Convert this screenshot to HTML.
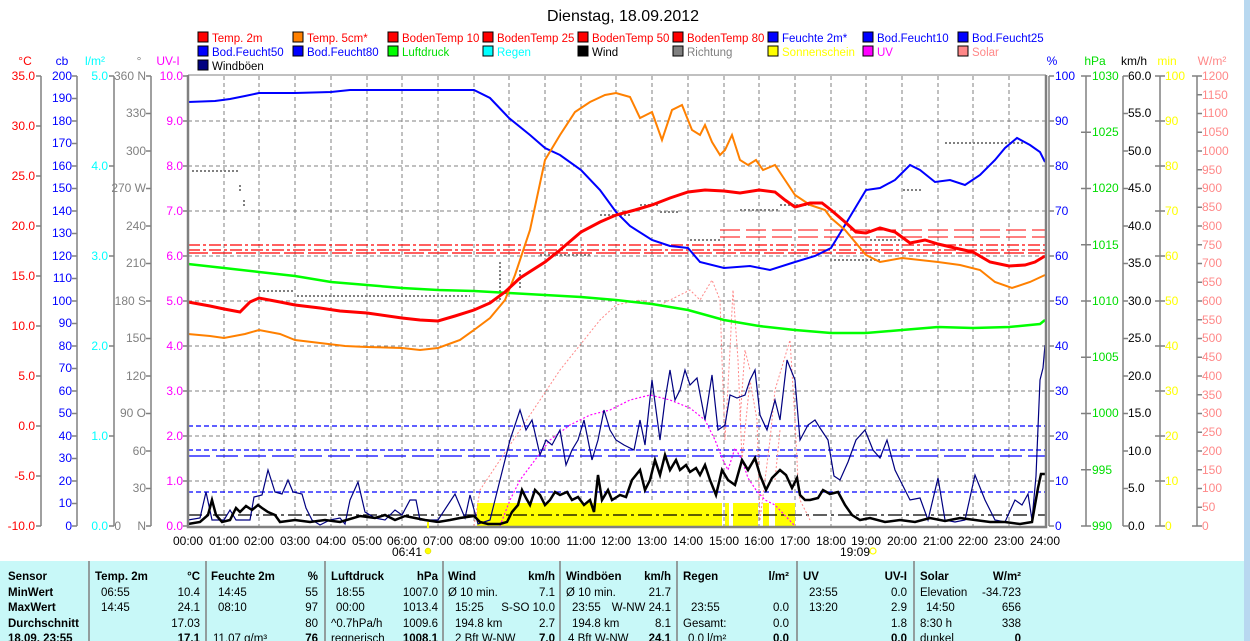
<!DOCTYPE html>
<html><head><meta charset="utf-8"><style>
html,body{margin:0;padding:0;background:#fff;width:1250px;height:641px;overflow:hidden}
svg{display:block;font-family:"Liberation Sans",Arial,sans-serif}
</style></head><body>
<svg width="1250" height="641" viewBox="0 0 1250 641" xmlns="http://www.w3.org/2000/svg">
<rect width="1250" height="641" fill="#fff"/>
<text x="623" y="21" font-size="16" text-anchor="middle" fill="#000">Dienstag, 18.09.2012</text>
<g font-size="11.5" stroke="#000" stroke-width="1">
<rect x="198" y="32" width="10" height="10" fill="#f00"/><rect x="293" y="32" width="10" height="10" fill="#ff8000"/><rect x="388" y="32" width="10" height="10" fill="#f00"/><rect x="483" y="32" width="10" height="10" fill="#f00"/><rect x="578" y="32" width="10" height="10" fill="#f00"/><rect x="673" y="32" width="10" height="10" fill="#f00"/><rect x="768" y="32" width="10" height="10" fill="#00f"/><rect x="863" y="32" width="10" height="10" fill="#00f"/><rect x="958" y="32" width="10" height="10" fill="#00f"/>
<rect x="198" y="46" width="10" height="10" fill="#00f"/><rect x="293" y="46" width="10" height="10" fill="#00f"/><rect x="388" y="46" width="10" height="10" fill="#0f0"/><rect x="483" y="46" width="10" height="10" fill="#0ff"/><rect x="578" y="46" width="10" height="10" fill="#000"/><rect x="673" y="46" width="10" height="10" fill="#808080"/><rect x="768" y="46" width="10" height="10" fill="#ff0"/><rect x="863" y="46" width="10" height="10" fill="#f0f"/><rect x="958" y="46" width="10" height="10" fill="#f88"/>
<rect x="198" y="60" width="10" height="10" fill="#000080"/>
</g>
<g font-size="11.5">
<text x="212" y="42" fill="#f00">Temp. 2m</text><text x="307" y="42" fill="#f00">Temp. 5cm*</text><text x="402" y="42" fill="#f00">BodenTemp 10</text><text x="497" y="42" fill="#f00">BodenTemp 25</text><text x="592" y="42" fill="#f00">BodenTemp 50</text><text x="687" y="42" fill="#f00">BodenTemp 80</text><text x="782" y="42" fill="#00f">Feuchte 2m*</text><text x="877" y="42" fill="#00f">Bod.Feucht10</text><text x="972" y="42" fill="#00f">Bod.Feucht25</text>
<text x="212" y="56" fill="#00f">Bod.Feucht50</text><text x="307" y="56" fill="#00f">Bod.Feucht80</text><text x="402" y="56" fill="#0d0">Luftdruck</text><text x="497" y="56" fill="#0ff">Regen</text><text x="592" y="56" fill="#000">Wind</text><text x="687" y="56" fill="#808080">Richtung</text><text x="782" y="56" fill="#ff0">Sonnenschein</text><text x="877" y="56" fill="#f0f">UV</text><text x="972" y="56" fill="#f88">Solar</text>
<text x="212" y="70" fill="#000">Windböen</text>
</g>
<g font-size="12">
<text x="25" y="65" fill="#f00" text-anchor="middle">°C</text><text x="62" y="65" fill="#00f" text-anchor="middle">cb</text><text x="95" y="65" fill="#0ff" text-anchor="middle">l/m²</text><text x="139" y="65" fill="#808080" text-anchor="middle">°</text><text x="168" y="65" fill="#f0f" text-anchor="middle">UV-I</text>
<text x="1052" y="65" fill="#00f" text-anchor="middle">%</text><text x="1095" y="65" fill="#0d0" text-anchor="middle">hPa</text><text x="1134" y="65" fill="#000" text-anchor="middle">km/h</text><text x="1167" y="65" fill="#ff0" text-anchor="middle">min</text><text x="1212" y="65" fill="#f88" text-anchor="middle">W/m²</text>
</g>
<g stroke="#808080" stroke-width="1.5" fill="none">
<path d="M41 76V526M77 76V526M114 76V526M151 76V526M1049 76V526M1086 76V526M1123 76V526M1160 76V526M1197 76V526"/>
<path d="M36 76h5M36 126h5M36 176h5M36 226h5M36 276h5M36 326h5M36 376h5M36 426h5M36 476h5M36 526h5"/>
<path d="M72 76h5M72 98.5h5M72 121h5M72 143.5h5M72 166h5M72 188.5h5M72 211h5M72 233.5h5M72 256h5M72 278.5h5M72 301h5M72 323.5h5M72 346h5M72 368.5h5M72 391h5M72 413.5h5M72 436h5M72 458.5h5M72 481h5M72 503.5h5M72 526h5"/>
<path d="M109 76h5M109 166h5M109 256h5M109 346h5M109 436h5M109 526h5"/>
<path d="M146 76h5M146 113.5h5M146 151h5M146 188.5h5M146 226h5M146 263.5h5M146 301h5M146 338.5h5M146 376h5M146 413.5h5M146 451h5M146 488.5h5M146 526h5"/>
<path d="M183 76h5M183 121h5M183 166h5M183 211h5M183 256h5M183 301h5M183 346h5M183 391h5M183 436h5M183 481h5M183 526h5"/>
<path d="M1049 76h5M1049 121h5M1049 166h5M1049 211h5M1049 256h5M1049 301h5M1049 346h5M1049 391h5M1049 436h5M1049 481h5M1049 526h5"/>
<path d="M1081 76h10M1081 132.25h10M1081 188.5h10M1081 244.75h10M1081 301h10M1081 357.25h10M1081 413.5h10M1081 469.75h10M1081 526h10"/>
<path d="M1123 76h5M1123 113.5h5M1123 151h5M1123 188.5h5M1123 226h5M1123 263.5h5M1123 301h5M1123 338.5h5M1123 376h5M1123 413.5h5M1123 451h5M1123 488.5h5M1123 526h5"/>
<path d="M1155 76h10M1155 121h10M1155 166h10M1155 211h10M1155 256h10M1155 301h10M1155 346h10M1155 391h10M1155 436h10M1155 481h10M1155 526h10"/>
<path d="M1192 76h10M1197 94.75h5M1197 113.5h5M1197 132.25h5M1197 151h5M1197 169.75h5M1197 188.5h5M1197 207.25h5M1197 226h5M1197 244.75h5M1197 263.5h5M1197 282.25h5M1197 301h5M1197 319.75h5M1197 338.5h5M1197 357.25h5M1197 376h5M1197 394.75h5M1197 413.5h5M1197 432.25h5M1197 451h5M1197 469.75h5M1197 488.5h5M1197 507.25h5M1192 526h10"/>
</g>
<g font-size="12" text-anchor="end">
<g fill="#f00"><text x="35" y="80">35.0</text><text x="35" y="130">30.0</text><text x="35" y="180">25.0</text><text x="35" y="230">20.0</text><text x="35" y="280">15.0</text><text x="35" y="330">10.0</text><text x="35" y="380">5.0</text><text x="35" y="430">0.0</text><text x="35" y="480">-5.0</text><text x="35" y="530">-10.0</text></g>
<g fill="#00f"><text x="72" y="80">200</text><text x="72" y="102">190</text><text x="72" y="125">180</text><text x="72" y="147">170</text><text x="72" y="170">160</text><text x="72" y="192">150</text><text x="72" y="215">140</text><text x="72" y="237">130</text><text x="72" y="260">120</text><text x="72" y="282">110</text><text x="72" y="305">100</text><text x="72" y="327">90</text><text x="72" y="350">80</text><text x="72" y="372">70</text><text x="72" y="395">60</text><text x="72" y="417">50</text><text x="72" y="440">40</text><text x="72" y="462">30</text><text x="72" y="485">20</text><text x="72" y="507">10</text><text x="72" y="530">0</text></g>
<g fill="#0ff"><text x="108" y="80">5.0</text><text x="108" y="170">4.0</text><text x="108" y="260">3.0</text><text x="108" y="350">2.0</text><text x="108" y="440">1.0</text><text x="108" y="530">0.0</text></g>
<g fill="#808080"><text x="146" y="80">360 N</text><text x="146" y="117">330</text><text x="146" y="155">300</text><text x="146" y="192">270 W</text><text x="146" y="230">240</text><text x="146" y="267">210</text><text x="146" y="305">180 S</text><text x="146" y="342">150</text><text x="146" y="380">120</text><text x="146" y="417">90 O</text><text x="146" y="455">60</text><text x="146" y="492">30</text><text x="146" y="530">N</text><text x="121" y="530">0</text></g>
<g fill="#f0f"><text x="183" y="80">10.0</text><text x="183" y="125">9.0</text><text x="183" y="170">8.0</text><text x="183" y="215">7.0</text><text x="183" y="260">6.0</text><text x="183" y="305">5.0</text><text x="183" y="350">4.0</text><text x="183" y="395">3.0</text><text x="183" y="440">2.0</text><text x="183" y="485">1.0</text><text x="183" y="530">0.0</text></g>
</g>
<g font-size="12">
<g fill="#00f"><text x="1055" y="80">100</text><text x="1055" y="125">90</text><text x="1055" y="170">80</text><text x="1055" y="215">70</text><text x="1055" y="260">60</text><text x="1055" y="305">50</text><text x="1055" y="350">40</text><text x="1055" y="395">30</text><text x="1055" y="440">20</text><text x="1055" y="485">10</text><text x="1055" y="530">0</text></g>
<g fill="#0d0"><text x="1092" y="80">1030</text><text x="1092" y="136">1025</text><text x="1092" y="192">1020</text><text x="1092" y="249">1015</text><text x="1092" y="305">1010</text><text x="1092" y="361">1005</text><text x="1092" y="417">1000</text><text x="1092" y="474">995</text><text x="1092" y="530">990</text></g>
<g fill="#000"><text x="1128" y="80">60.0</text><text x="1128" y="117">55.0</text><text x="1128" y="155">50.0</text><text x="1128" y="192">45.0</text><text x="1128" y="230">40.0</text><text x="1128" y="267">35.0</text><text x="1128" y="305">30.0</text><text x="1128" y="342">25.0</text><text x="1128" y="380">20.0</text><text x="1128" y="417">15.0</text><text x="1128" y="455">10.0</text><text x="1128" y="492">5.0</text><text x="1128" y="530">0.0</text></g>
<g fill="#ff0"><text x="1165" y="80">100</text><text x="1165" y="125">90</text><text x="1165" y="170">80</text><text x="1165" y="215">70</text><text x="1165" y="260">60</text><text x="1165" y="305">50</text><text x="1165" y="350">40</text><text x="1165" y="395">30</text><text x="1165" y="440">20</text><text x="1165" y="485">10</text><text x="1165" y="530">0</text></g>
<g fill="#f88"><text x="1202" y="80">1200</text><text x="1202" y="99">1150</text><text x="1202" y="117">1100</text><text x="1202" y="136">1050</text><text x="1202" y="155">1000</text><text x="1202" y="174">950</text><text x="1202" y="192">900</text><text x="1202" y="211">850</text><text x="1202" y="230">800</text><text x="1202" y="249">750</text><text x="1202" y="267">700</text><text x="1202" y="286">650</text><text x="1202" y="305">600</text><text x="1202" y="324">550</text><text x="1202" y="342">500</text><text x="1202" y="361">450</text><text x="1202" y="380">400</text><text x="1202" y="399">350</text><text x="1202" y="417">300</text><text x="1202" y="436">250</text><text x="1202" y="455">200</text><text x="1202" y="474">150</text><text x="1202" y="492">100</text><text x="1202" y="511">50</text><text x="1202" y="530">0</text></g>
</g>
<g stroke="#808080" stroke-width="1" stroke-dasharray="4,3" fill="none">
<path d="M224 76V526M259 76V526M295 76V526M331 76V526M367 76V526M402 76V526M438 76V526M474 76V526M509 76V526M545 76V526M581 76V526M616 76V526M652 76V526M688 76V526M724 76V526M759 76V526M795 76V526M831 76V526M866 76V526M902 76V526M938 76V526M973 76V526M1009 76V526"/>
<path d="M188 121H1045M188 166H1045M188 211H1045M188 256H1045M188 301H1045M188 346H1045M188 391H1045M188 436H1045M188 481H1045"/>
</g>
<g fill="#ff0"><rect x="477" y="503" width="245" height="23"/><rect x="725" y="503" width="4" height="23"/><rect x="733" y="503" width="25" height="23"/><rect x="763" y="503" width="6" height="23"/><rect x="775" y="503" width="20" height="23"/></g>
<g fill="none" stroke-width="1.3">
<path d="M188 245H1045M188 250H1045" stroke="#f00" stroke-dasharray="12,3,3,3"/>
<path d="M188 253H1045" stroke="#f00" stroke-dasharray="20,4"/>
<path d="M720 237H1045M720 230H1045" stroke="#f00" stroke-dasharray="20,6" stroke-width="1"/>
<path d="M188 426H1045M188 450H1045M188 492H1045" stroke="#00f" stroke-dasharray="5,3"/>
<path d="M188 456H1045" stroke="#00f" stroke-dasharray="22,6"/>
<path d="M188 515H1045" stroke="#000" stroke-dasharray="14,4,3,4"/>
</g>
<g fill="none" stroke="#808080" stroke-width="2" stroke-dasharray="2,2">
<path d="M192 171H238M240 185v8M244 200v8M259 291H295M297 296H470M500 262v40M520 270v20M540 255h50M600 215h30M640 205h20M660 212h20M690 240H720M740 210h40M780 205h30M830 260h50M870 240h30M903 190h20M945 143h80"/>
</g>
<g fill="none" stroke="#f88" stroke-width="1" stroke-dasharray="2,2">
<path d="M474 526L480 490L500 460L520 430L540 400L560 370L580 345L600 320L616 305L640 300L660 305L690 290L700 300L712 280L720 300L722 360L725 440L730 350L733 290L738 360L742 460L750 380L757 420L760 520M760 520L770 440L775 390L790 340L795 420L798 480L800 500L810 520"/>
<path d="M740 420L745 350L750 370M775 480L780 430"/>
</g>
<path d="M500 526L510 500L520 480L535 460L550 440L570 425L590 415L610 410L630 400L650 395L670 400L690 408L705 420L715 440L723 460L728 470L735 448L742 460L748 478L756 490L765 500L775 505L795 526" fill="none" stroke="#f0f" stroke-width="1.2" stroke-dasharray="2,2"/>
<polyline fill="none" stroke="#0f0" stroke-width="2.5" points="188,264 224,268 259,272 295,276 331,282 367,285 402,288 438,290 474,291 509,293 545,295 581,297 616,300 652,304 688,310 724,320 759,326 795,330 831,333 866,333 902,330 938,327 973,328 1009,327 1040,324 1045,320"/>
<polyline fill="none" stroke="#00f" stroke-width="2" points="188,102 215,101 230,99 245,96 259,93 295,93 331,92 350,90 367,90 402,90 438,90 474,90 490,98 509,118 530,135 545,148 560,155 581,170 600,190 616,212 630,226 652,240 670,246 688,248 700,262 724,268 750,266 770,270 795,262 815,256 831,248 845,225 860,200 866,190 880,188 895,180 910,165 920,170 935,182 950,180 965,185 980,175 995,160 1005,148 1017,138 1030,145 1040,152 1045,162"/>
<polyline fill="none" stroke="#ff8000" stroke-width="2" points="188,334 210,336 224,338 245,334 259,330 280,334 295,340 320,343 345,346 367,347 402,348 420,350 438,348 460,340 474,330 490,318 505,300 515,275 530,230 545,160 560,135 575,112 590,102 605,95 616,93 630,97 640,118 652,112 662,140 672,110 682,105 692,130 700,135 705,125 712,142 720,155 725,150 732,135 740,160 748,165 756,160 763,170 775,165 785,180 795,195 810,205 825,210 831,218 845,230 866,255 880,262 902,258 920,260 938,262 960,265 980,270 995,282 1012,288 1030,282 1045,275"/>
<polyline fill="none" stroke="#f00" stroke-width="3" points="188,302 210,306 224,309 240,312 250,302 259,298 280,302 295,305 320,308 340,311 367,313 402,318 420,320 438,321 455,316 474,310 490,303 505,292 520,278 545,262 560,250 581,232 600,222 616,215 635,210 652,205 670,198 688,192 705,190 724,191 740,193 759,190 775,192 785,200 795,207 810,203 822,203 831,210 845,222 856,232 866,233 880,228 895,232 910,243 925,240 938,244 955,248 973,252 990,262 1009,266 1025,265 1035,262 1045,256"/>
<polyline fill="none" stroke="#000080" stroke-width="1.2" points="188,520 200,518 206,492 212,520 224,520 230,510 236,520 250,520 254,497 262,495 268,470 275,492 282,494 288,480 293,492 302,494 306,508 312,520 320,525 330,520 340,518 345,524 350,500 358,482 365,512 375,518 385,520 395,510 402,515 410,500 416,500 420,520 438,520 455,494 465,518 470,495 478,524 490,520 500,480 510,440 520,410 526,430 532,420 540,455 546,440 552,445 560,430 566,465 572,450 578,440 584,420 592,460 598,440 604,410 610,430 616,440 624,445 634,450 640,420 645,445 652,380 660,440 665,400 670,370 675,400 680,390 685,370 690,385 697,378 705,420 712,375 718,430 725,425 730,395 737,398 745,395 750,380 755,370 760,415 767,430 775,400 780,420 787,360 795,380 800,440 808,425 815,420 820,428 828,440 834,476 840,480 848,462 856,440 865,430 873,450 880,458 887,440 895,470 900,480 910,500 920,498 928,520 938,478 945,520 955,522 965,520 975,475 985,500 995,520 1005,522 1015,500 1022,505 1028,494 1032,520 1036,476 1040,380 1043,368 1045,345"/>
<polyline fill="none" stroke="#000" stroke-width="2.5" points="188,524 200,522 208,515 212,500 216,515 222,522 230,520 236,508 240,512 246,506 252,510 258,505 262,508 268,512 275,515 280,522 295,520 310,522 325,520 340,522 360,516 375,518 385,515 395,520 405,516 415,518 425,520 438,522 450,520 460,518 474,516 480,522 488,524 500,524 507,522 512,512 518,505 522,490 526,498 530,505 535,490 540,495 545,505 550,500 555,492 560,495 567,492 572,500 578,497 584,505 590,500 594,512 598,475 602,500 608,490 612,500 620,495 626,497 632,480 640,470 645,490 650,480 655,460 660,475 665,455 670,470 676,460 680,470 686,465 690,472 696,468 700,475 705,465 710,480 716,495 722,470 728,480 735,485 742,460 748,470 755,458 760,475 766,490 772,478 780,470 786,475 792,488 797,478 800,495 805,500 810,500 818,498 823,490 830,494 838,492 845,505 852,515 860,520 870,518 885,522 900,520 915,522 930,518 945,521 960,518 975,520 990,522 1005,522 1020,524 1032,522 1038,488 1041,474 1045,474"/>
<path d="M188 75V527H1046V75" fill="none" stroke="#808080" stroke-width="2.5"/>
<path d="M188 75H1046" stroke="#808080" stroke-width="1"/>
<g font-size="12" text-anchor="middle" fill="#000">
<text x="188" y="545">00:00</text><text x="224" y="545">01:00</text><text x="259" y="545">02:00</text><text x="295" y="545">03:00</text><text x="331" y="545">04:00</text><text x="367" y="545">05:00</text><text x="402" y="545">06:00</text><text x="438" y="545">07:00</text><text x="474" y="545">08:00</text><text x="509" y="545">09:00</text><text x="545" y="545">10:00</text><text x="581" y="545">11:00</text><text x="616" y="545">12:00</text><text x="652" y="545">13:00</text><text x="688" y="545">14:00</text><text x="724" y="545">15:00</text><text x="759" y="545">16:00</text><text x="795" y="545">17:00</text><text x="831" y="545">18:00</text><text x="866" y="545">19:00</text><text x="902" y="545">20:00</text><text x="938" y="545">21:00</text><text x="973" y="545">22:00</text><text x="1009" y="545">23:00</text><text x="1045" y="545">24:00</text>
<text x="407" y="556">06:41</text><text x="855" y="556">19:09</text>
</g>
<circle cx="428" cy="551" r="3" fill="#ff0" stroke="#cc0" stroke-width="0.5"/>
<circle cx="873" cy="551" r="3" fill="none" stroke="#ff0" stroke-width="1.2"/>
<path d="M428 522v6" stroke="#ff0" stroke-width="2"/>
<rect x="0" y="561" width="1250" height="80" fill="#c8f8f8"/>
<rect x="1244" y="0" width="6" height="641" fill="#b8d8f0"/>
<g stroke="#808080" stroke-width="1.5"><path d="M89 561V641M206 561V641M325 561V641M443 561V641M560 561V641M677 561V641M797 561V641M914 561V641"/></g>
<g font-size="11.5" fill="#000">
<g font-weight="bold"><text x="8" y="580">Sensor</text><text x="8" y="596">MinWert</text><text x="8" y="611">MaxWert</text><text x="8" y="627">Durchschnitt</text><text x="8" y="642">18.09. 23:55</text>
<text x="95" y="580">Temp. 2m</text><text x="200" y="580" text-anchor="end">°C</text>
<text x="211" y="580">Feuchte 2m</text><text x="318" y="580" text-anchor="end">%</text>
<text x="331" y="580">Luftdruck</text><text x="438" y="580" text-anchor="end">hPa</text>
<text x="448" y="580">Wind</text><text x="555" y="580" text-anchor="end">km/h</text>
<text x="566" y="580">Windböen</text><text x="671" y="580" text-anchor="end">km/h</text>
<text x="683" y="580">Regen</text><text x="789" y="580" text-anchor="end">l/m²</text>
<text x="803" y="580">UV</text><text x="907" y="580" text-anchor="end">UV-I</text>
<text x="920" y="580">Solar</text><text x="1021" y="580" text-anchor="end">W/m²</text>
<text x="200" y="642" text-anchor="end">17.1</text><text x="318" y="642" text-anchor="end">76</text><text x="438" y="642" text-anchor="end">1008.1</text><text x="555" y="642" text-anchor="end">7.0</text><text x="671" y="642" text-anchor="end">24.1</text><text x="789" y="642" text-anchor="end">0.0</text><text x="907" y="642" text-anchor="end">0.0</text><text x="1021" y="642" text-anchor="end">0</text></g>
<text x="101" y="596">06:55</text><text x="200" y="596" text-anchor="end">10.4</text><text x="101" y="611">14:45</text><text x="200" y="611" text-anchor="end">24.1</text><text x="200" y="627" text-anchor="end">17.03</text>
<text x="218" y="596">14:45</text><text x="318" y="596" text-anchor="end">55</text><text x="218" y="611">08:10</text><text x="318" y="611" text-anchor="end">97</text><text x="318" y="627" text-anchor="end">80</text><text x="213" y="642">11.07 g/m³</text>
<text x="336" y="596">18:55</text><text x="438" y="596" text-anchor="end">1007.0</text><text x="336" y="611">00:00</text><text x="438" y="611" text-anchor="end">1013.4</text><text x="331" y="627">^0.7hPa/h</text><text x="438" y="627" text-anchor="end">1009.6</text><text x="331" y="642">regnerisch</text>
<text x="448" y="596">Ø 10 min.</text><text x="555" y="596" text-anchor="end">7.1</text><text x="455" y="611">15:25</text><text x="555" y="611" text-anchor="end">S-SO 10.0</text><text x="455" y="627">194.8 km</text><text x="555" y="627" text-anchor="end">2.7</text><text x="455" y="642">2 Bft W-NW</text>
<text x="566" y="596">Ø 10 min.</text><text x="671" y="596" text-anchor="end">21.7</text><text x="572" y="611">23:55</text><text x="671" y="611" text-anchor="end">W-NW 24.1</text><text x="572" y="627">194.8 km</text><text x="671" y="627" text-anchor="end">8.1</text><text x="568" y="642">4 Bft W-NW</text>
<text x="691" y="611">23:55</text><text x="789" y="611" text-anchor="end">0.0</text><text x="683" y="627">Gesamt:</text><text x="789" y="627" text-anchor="end">0.0</text><text x="688" y="642">0.0 l/m²</text>
<text x="809" y="596">23:55</text><text x="907" y="596" text-anchor="end">0.0</text><text x="809" y="611">13:20</text><text x="907" y="611" text-anchor="end">2.9</text><text x="907" y="627" text-anchor="end">1.8</text>
<text x="920" y="596">Elevation</text><text x="1021" y="596" text-anchor="end">-34.723</text><text x="926" y="611">14:50</text><text x="1021" y="611" text-anchor="end">656</text><text x="920" y="627">8:30 h</text><text x="1021" y="627" text-anchor="end">338</text><text x="920" y="642">dunkel</text>
</g>
</svg>
</body></html>
